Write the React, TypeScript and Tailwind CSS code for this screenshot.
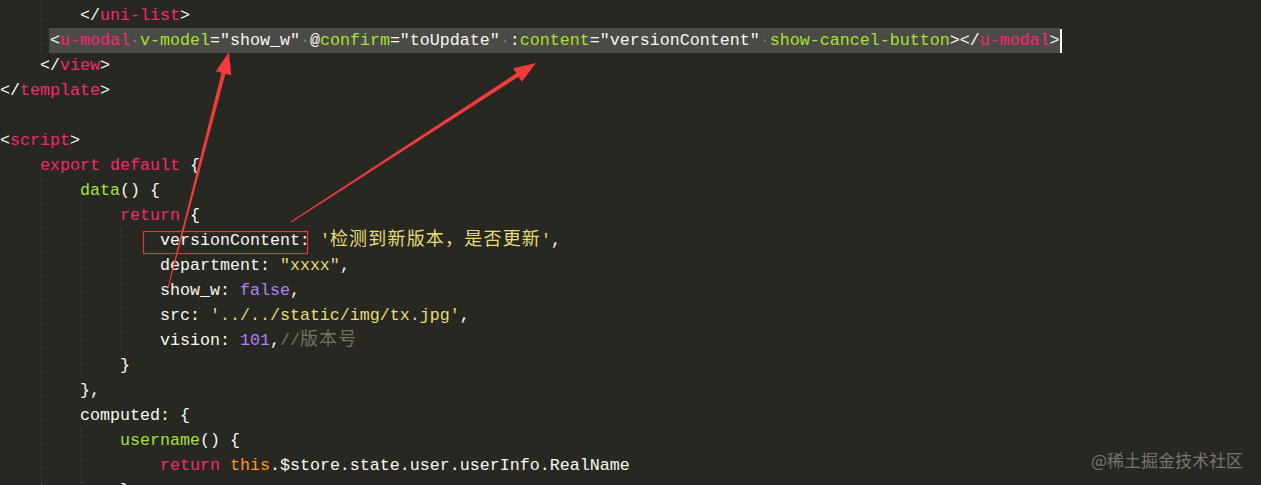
import React from 'react';

const W = 'text-[#f8f8f2]';
const P = 'text-[#f92672]';
const G = 'text-[#a6e22e]';
const Y = 'text-[#e6db74]';
const V = 'text-[#ae81ff]';
const C = 'text-[#75715e]';
const O = 'text-[#fd971f]';

type Tok = [string, string, boolean?];

const Cjk: React.FC<{ text: string; cls: string }> = ({ text, cls }) => (
  <span
    className={`${cls} text-[18px] tracking-[1.2px] leading-[0]`}
    style={{ fontFamily: '"Noto Sans CJK SC", sans-serif' }}
  >
    {text}
  </span>
);

const Line: React.FC<{ indent?: number; toks?: Tok[] }> = ({ indent = 0, toks = [] }) => (
  <div className="h-[25px] leading-[25px] whitespace-pre">
    {' '.repeat(indent)}
    {toks.map(([t, cls, cjk], i) =>
      cjk ? <Cjk key={i} text={t} cls={cls} /> : (
        <span key={i} className={cls}>
          {t}
        </span>
      )
    )}
  </div>
);

const Dot = () => <span className="text-[#7a7a74]">·</span>;

const ModalLine = () => (
  <div className="h-[25px] leading-[25px] whitespace-pre pl-[49px] flex items-center">
    <span className="bg-[#4a4a46] h-[25px] pl-[1px]">
      <span className={W}>&lt;</span>
      <span className={P}>u-modal</span>
      <Dot />
      <span className={G}>v-model</span>
      <span className={W}>="show_w"</span>
      <Dot />
      <span className={W}>@</span>
      <span className={G}>confirm</span>
      <span className={W}>="toUpdate"</span>
      <Dot />
      <span className={W}>:</span>
      <span className={G}>content</span>
      <span className={W}>="versionContent"</span>
      <Dot />
      <span className={G}>show-cancel-button</span>
      <span className={W}>&gt;&lt;/</span>
      <span className={P}>u-modal</span>
      <span className={W}>&gt;</span>
    </span>
    <span className="w-[2px] h-[24px] bg-[#f8f8f2]" />
  </div>
);

const guides = [
  { x: 41, y1: 0, y2: 53 },
  { x: 41, y1: 178, y2: 485 },
  { x: 81, y1: 203, y2: 378 },
  { x: 81, y1: 428, y2: 485 },
  { x: 121, y1: 228, y2: 353 },
];

export default function App() {
  return (
    <div
      className="relative w-[1261px] h-[485px] overflow-hidden bg-[#272822] text-[16.67px] pt-[3px]"
      style={{ fontFamily: '"Liberation Mono", "Noto Sans CJK SC", monospace' }}
    >
      <svg className="absolute inset-0 pointer-events-none" width="1261" height="485">
        {guides.map((g, i) => (
          <line
            key={i}
            x1={g.x + 0.5}
            x2={g.x + 0.5}
            y1={g.y1}
            y2={g.y2}
            stroke="#4e4e48"
            strokeWidth="1"
            strokeDasharray="1 2"
          />
        ))}
      </svg>

      <Line indent={8} toks={[['</', W], ['uni-list', P], ['>', W]]} />
      <ModalLine />
      <Line indent={4} toks={[['</', W], ['view', P], ['>', W]]} />
      <Line toks={[['</', W], ['template', P], ['>', W]]} />
      <Line />
      <Line toks={[['<', W], ['script', P], ['>', W]]} />
      <Line indent={4} toks={[['export default', P], [' {', W]]} />
      <Line indent={8} toks={[['data', G], ['() {', W]]} />
      <Line indent={12} toks={[['return', P], [' {', W]]} />
      <Line
        indent={16}
        toks={[
          ['versionContent: ', W],
          ["'", Y],
          ['检测到新版本，是否更新', Y, true],
          ["'", Y],
          [',', W],
        ]}
      />
      <Line indent={16} toks={[['department: ', W], ['"xxxx"', Y], [',', W]]} />
      <Line indent={16} toks={[['show_w: ', W], ['false', V], [',', W]]} />
      <Line indent={16} toks={[['src: ', W], ["'../../static/img/tx.jpg'", Y], [',', W]]} />
      <Line
        indent={16}
        toks={[
          ['vision: ', W],
          ['101', V],
          [',', W],
          ['//', C],
          ['版本号', C, true],
        ]}
      />
      <Line indent={12} toks={[['}', W]]} />
      <Line indent={8} toks={[['},', W]]} />
      <Line indent={8} toks={[['computed: {', W]]} />
      <Line indent={12} toks={[['username', G], ['() {', W]]} />
      <Line
        indent={16}
        toks={[
          ['return', P],
          [' ', W],
          ['this', O],
          ['.$store.state.user.userInfo.RealName', W],
        ]}
      />
      <Line indent={12} toks={[['}', W]]} />

      <svg className="absolute inset-0 pointer-events-none" width="1261" height="485">
        <rect x="143.5" y="231.5" width="164" height="22" fill="none" stroke="#e0393c" strokeWidth="1.2" />
        <polygon
          fill="#f23b3b"
          points="168.5,288.1 225.4,73.8 231.2,75.3 229,52 215.8,71.3 221.6,72.8 167.5,287.9"
        />
        <polygon
          fill="#f23b3b"
          points="291.3,222.4 518.6,76.7 521.9,81.7 536,63 513.1,68.3 516.4,73.3 290.7,221.6"
        />
      </svg>

      <div
        className="absolute right-[18px] bottom-[17px] text-[17px] leading-none text-[#9a9a96]/70"
        style={{ fontFamily: '"Noto Sans CJK SC", "Noto Sans", sans-serif' }}
      >
        @稀土掘金技术社区
      </div>
    </div>
  );
}
